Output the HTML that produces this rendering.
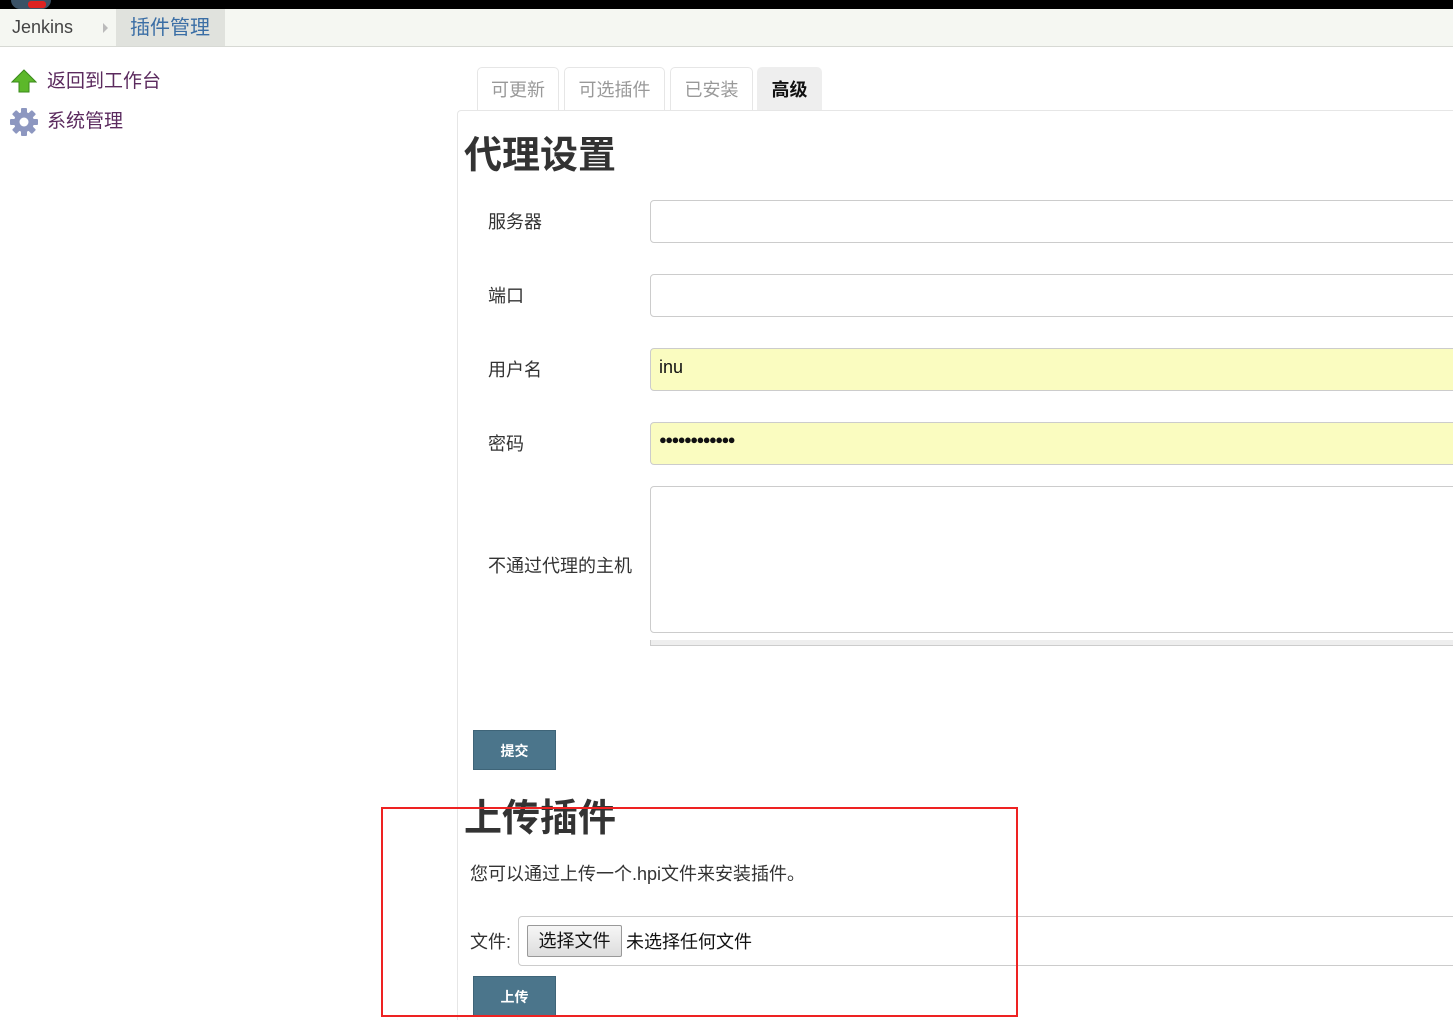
<!DOCTYPE html>
<html><head><meta charset="utf-8">
<style>
*{box-sizing:border-box;margin:0;padding:0}
body{width:1453px;height:1017px;overflow:hidden;background:#fff;font-family:"Liberation Sans","Noto Sans CJK SC",sans-serif;color:#333;position:relative}
.a{position:absolute}
.inp{position:absolute;left:650px;width:820px;border:1px solid #ccc;border-radius:4px;background:#fff}
.lbl{position:absolute;left:488px;font-size:18px;color:#333}
.tab{position:absolute;top:67px;height:44px;border:1px solid #e6e6e6;border-bottom:none;border-radius:5px 5px 0 0;font-size:18px;color:#999;text-align:center;line-height:44px}
.btn{position:absolute;left:473px;width:83px;height:40px;background:#4b758b;color:#fff;font-size:14px;font-weight:bold;text-align:center;line-height:40px;border:1px solid #3e6478}
</style></head><body>
<div class="a" style="left:0;top:0;width:1453px;height:9px;background:#000"></div>
<div class="a" style="left:11px;top:0;width:40px;height:9px;background:#3b5266;border-radius:0 0 16px 16px"></div>
<div class="a" style="left:28px;top:1px;width:18px;height:7px;background:#d22;border-radius:3px"></div>
<div class="a" style="left:0;top:9px;width:1453px;height:38px;background:#f5f7f2;border-bottom:1px solid #d7d9d4"></div>
<div class="a" style="left:12px;top:17px;font-size:18px;color:#444">Jenkins</div>
<div class="a" style="left:103px;top:23px;width:0;height:0;border-left:5px solid #bbb;border-top:5px solid transparent;border-bottom:5px solid transparent"></div>
<div class="a" style="left:116px;top:9px;width:109px;height:37px;background:#e0e2dd"></div>
<div class="a" style="left:130px;top:11px;font-size:20px;color:#3a6ea5">插件管理</div>
<svg class="a" style="left:11px;top:68px" width="26" height="26" viewBox="0 0 26 26"><path d="M13 2 L25 14 H18 V24 H8 V14 H1 Z" fill="#5cb82a" stroke="#3a8a1a" stroke-width="1"/></svg>
<div class="a" style="left:47px;top:66px;font-size:19px;color:#5b2a5e">返回到工作台</div>
<svg class="a" style="left:9px;top:107px" width="30" height="30" viewBox="0 0 30 30"><g fill="#8d97c0"><circle cx="15" cy="15" r="10"/><rect x="12" y="1" width="6" height="28" rx="1"/><rect x="1" y="12" width="28" height="6" rx="1"/><rect x="12" y="1" width="6" height="28" rx="1" transform="rotate(45 15 15)"/><rect x="12" y="1" width="6" height="28" rx="1" transform="rotate(-45 15 15)"/></g><circle cx="15" cy="15" r="4.5" fill="#fff"/></svg>
<div class="a" style="left:47px;top:106px;font-size:19px;color:#5b2a5e">系统管理</div>

<div class="tab" style="left:477px;width:82px">可更新</div>
<div class="tab" style="left:564px;width:101px">可选插件</div>
<div class="tab" style="left:670px;width:83px">已安装</div>
<div class="tab" style="left:757px;width:65px;background:#eee;color:#111;font-weight:bold;border-color:#eee">高级</div>
<div class="a" style="left:457px;top:110px;width:1000px;height:910px;border-left:1px solid #e6e6e6;border-top:1px solid #e6e6e6;border-radius:4px 0 0 0"></div>

<div class="a" style="left:464px;top:124px;font-size:38px;font-weight:bold;color:#333">代理设置</div>
<div class="lbl" style="top:208px">服务器</div>
<div class="inp" style="top:200px;height:43px"></div>
<div class="lbl" style="top:282px">端口</div>
<div class="inp" style="top:274px;height:43px"></div>
<div class="lbl" style="top:356px">用户名</div>
<div class="inp" style="top:348px;height:43px;background:#fafcc0"></div>
<div class="a" style="left:659px;top:357px;font-size:18px;color:#111">inu</div>
<div class="lbl" style="top:430px">密码</div>
<div class="inp" style="top:422px;height:43px;background:#fafcc0"></div>
<div class="a" style="left:659px;top:432px;font-size:13px;color:#111;letter-spacing:-1.6px">●●●●●●●●●●●●</div>
<div class="lbl" style="top:552px">不通过代理的主机</div>
<div class="inp" style="top:486px;height:147px"></div>
<div class="a" style="left:650px;top:640px;width:820px;height:6px;background:#eee;border:1px solid #ccc;border-top:none"></div>

<div class="btn" style="top:730px">提交</div>
<div class="a" style="left:464px;top:787px;font-size:38px;font-weight:bold;color:#333">上传插件</div>
<div class="a" style="left:470px;top:860px;font-size:18px;color:#333">您可以通过上传一个.hpi文件来安装插件。</div>
<div class="a" style="left:470px;top:928px;font-size:18px;color:#333">文件:</div>
<div class="a" style="left:518px;top:916px;width:950px;height:50px;border:1px solid #ccc;border-radius:4px"></div>
<div class="a" style="left:527px;top:925px;width:95px;height:32px;border:1px solid #999;border-radius:2px;background:linear-gradient(#f6f6f6,#ddd);font-size:18px;color:#111;text-align:center;line-height:30px">选择文件</div>
<div class="a" style="left:626px;top:928px;font-size:18px;color:#111">未选择任何文件</div>
<div class="btn" style="top:976px">上传</div>
<div class="a" style="left:381px;top:807px;width:637px;height:210px;border:2px solid #e22"></div>
</body></html>
